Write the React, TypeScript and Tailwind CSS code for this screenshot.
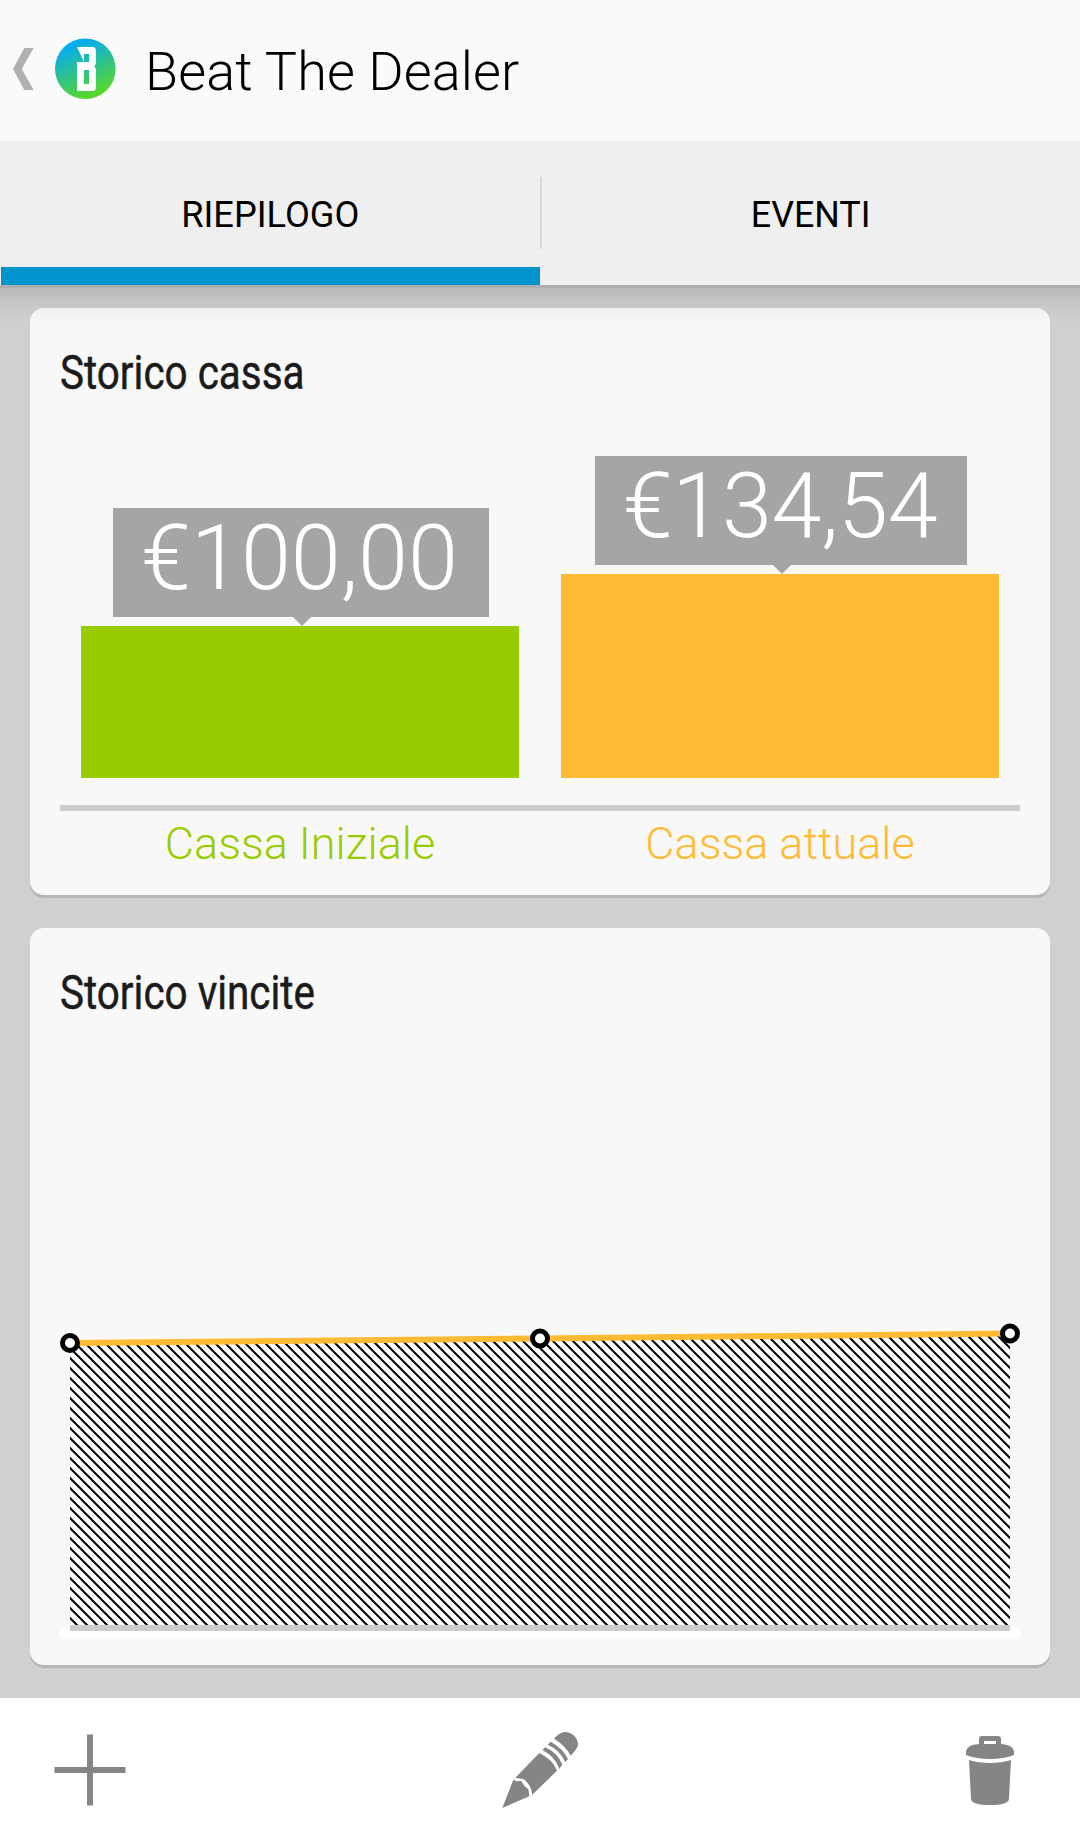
import type { ReactNode } from "react";

const bars = [
  {
    label: "Cassa Iniziale",
    value: "€100,00",
    height: 152,
    column: "ml-[21px]",
    bar: "bg-[#99cc00]",
    text: "text-[#99cc00]",
    bubble: "w-[376px] left-px pr-[3px]",
    arrow: "left-[180px]",
  },
  {
    label: "Cassa attuale",
    value: "€134,54",
    height: 204,
    column: "ml-[42px]",
    bar: "bg-[#ffbb33]",
    text: "text-[#ffbb33]",
    bubble: "w-[372px] left-px pr-[2px] tracking-[-0.3px]",
    arrow: "left-[178px]",
  },
];

const points = [
  { x: 10, y: 13 },
  { x: 480, y: 8.5 },
  { x: 950, y: 3.5 },
];

const Logo = () => (
  <svg className="ml-[19px] h-[64px] w-[64px]" viewBox="53 37 64 64">
    <defs>
      <linearGradient id="logo" x1="0.3" y1="0" x2="0.7" y2="1">
        <stop offset="0.08" stopColor="#04adf2" />
        <stop offset="0.9" stopColor="#55d62f" />
      </linearGradient>
    </defs>
    <circle cx="85.3" cy="68.8" r="30.3" fill="url(#logo)" />
    <path
      fill="#fff"
      fillRule="evenodd"
      d="M77 47H92.5Q95.9 47 95.9 50.5V64L94.2 66.5L95.9 68.5V87.5Q95.9 91 92.5 91H77V62H83.5V60.8ZM84 54V62H89V54ZM84 70V84H89V70Z"
    />
  </svg>
);

const Card = ({ title, className, children }: { title: string; className: string; children: ReactNode }) => (
  <section className={`rounded-[14px] bg-[#f8f8f8] px-[30px] shadow-[0_3px_0_#b6b7b6] ${className}`}>
    <h2 className="flex h-[128px] origin-left scale-x-[0.842] items-center pt-[2px] text-[48px] whitespace-nowrap text-[#1b1b1b] [-webkit-text-stroke:0.5px_#1b1b1b]">
      {title}
    </h2>
    {children}
  </section>
);

const App = () => {
  return (
    <div className="flex h-[1842px] w-[1080px] flex-col overflow-hidden bg-[#d0d0d0] font-['Roboto',sans-serif]">
      {/* ACTION BAR */}
      <header className="flex h-[141px] shrink-0 items-center bg-[#fafafa] pb-[3px]">
        <svg className="ml-[13px] h-[42px] w-[21px]" viewBox="0 0 21 42">
          <path d="M11.3 0H20.7L8.7 21L20.7 42H11.3L0 21Z" fill="#b0b0b0" />
        </svg>
        <Logo />
        <h1 className="ml-[28px] pt-[5px] text-[54px] font-light tracking-[0.08px] text-black">Beat The Dealer</h1>
      </header>

      {/* TABS */}
      <nav className="relative z-10 flex h-[144px] shrink-0 bg-[#efefef] text-[37.5px] text-black">
        <button className="ml-px h-full w-[539px] border-b-[18px] border-[#0093cc] pt-[20px]">
          <span className="inline-block scale-x-[0.965]">RIEPILOGO</span>
        </button>
        <div className="mt-[36px] h-[72px] w-[2px] bg-[#d8d8d8]" />
        <button className="h-full w-[538px] pt-[2px]">
          <span className="inline-block scale-x-[0.955]">EVENTI</span>
        </button>
        <div className="absolute top-full left-0 h-[3px] w-full bg-[#adafad]" />
        <div className="absolute top-[147px] left-0 h-[36px] w-full bg-linear-to-b from-black/11 via-black/4 to-transparent" />
      </nav>

      <main className="flex grow flex-col gap-[33px] px-[30px] pt-[23px]">
        <Card title="Storico cassa" className="h-[587px]">
          <div className="flex h-[342px] items-end">
            {bars.map((b) => (
              <div key={b.label} className={`flex w-[438px] flex-col items-center ${b.column}`}>
                <div
                  className={`relative mb-[9px] flex h-[109px] items-center justify-center bg-[#a5a5a5] pb-[8px] text-[90px] font-light text-white ${b.bubble}`}
                >
                  {b.value}
                  <svg className={`absolute top-full h-[9px] w-[18px] ${b.arrow}`} viewBox="0 0 18 9">
                    <path d="M0 0H18L9 9Z" fill="#a5a5a5" />
                  </svg>
                </div>
                <div className={`w-full ${b.bar}`} style={{ height: b.height }} />
              </div>
            ))}
          </div>
          <div className="mt-[27px] h-[6px] bg-[#cccccc]" />
          <div className="flex text-[45px] font-light">
            {bars.map((b) => (
              <div key={b.label} className={`w-[480px] text-center leading-[66px] ${b.text}`}>
                {b.label}
              </div>
            ))}
          </div>
        </Card>

        <Card title="Storico vincite" className="h-[737px]">
          <svg className="mt-[274px] h-[320px] w-[960px] overflow-visible" viewBox="0 0 960 320">
            <defs>
              <pattern id="hatch" x="2" width="10" height="10" patternUnits="userSpaceOnUse">
                <rect width="10" height="10" fill="#fff" />
                <path d="M-5 -5L15 15M-5 5L5 15M5 -5L15 5" stroke="#000" strokeWidth="2" />
              </pattern>
            </defs>
            <path d="M10 13L480 8.5L950 3.5V295H10Z" fill="url(#hatch)" />
            <rect x="0" y="298" width="960" height="10" fill="#fff" />
            <rect x="10" y="295" width="940" height="6" fill="#cccccc" />
            <polyline points={points.map((p) => `${p.x},${p.y}`).join(" ")} fill="none" stroke="#ffbb33" strokeWidth="6" />
            {points.map((p) => (
              <circle key={p.x} cx={p.x} cy={p.y} r="7.5" fill="#fff" stroke="#000" strokeWidth="5" />
            ))}
          </svg>
        </Card>
      </main>

      {/* BOTTOM BAR */}
      <footer className="flex h-[144px] shrink-0 items-center bg-white pr-[66px] pl-[54px]">
        <svg className="h-[72px] w-[72px]" viewBox="0 0 72 72">
          <path d="M36 0.5V71.5M0.5 36H71.5" stroke="#858585" strokeWidth="6" />
        </svg>
        <svg className="ml-[364px] h-[120px] w-[100px]" viewBox="0 0 300 360" fill="#858585">
          <path d="M192 86Q210 66 224 66Q242 66 254 79Q264 90 264 104Q262 116 242 137Q226 106 192 86Z" />
          <path d="M182 95Q220 116 234 148L225 156Q210 120 173 104Z" />
          <path d="M166 112Q204 130 217 164L208 176Q194 139 157 120Z" />
          <path d="M148 129Q188 148 201 182L127 254Q124 226 102 208L76 203Z" />
          <path d="M70 209L80 214L94 213L104 229L115 237L118 259L37 294Z" />
        </svg>
        <svg className="ml-auto h-[70px] w-[48px]" viewBox="0 0 48 70" fill="#858585">
          <path d="M13 9V4Q13 1 16 1H32Q35 1 35 4V9Q47 10 48 16V20Q38 24 24 24Q10 24 0 20V16Q1 10 13 9ZM18 6V9H30V6Z" />
          <path d="M3 25Q12 28 24 28Q36 28 45 25L43 64Q42 70 24 70Q6 70 5 64Z" />
        </svg>
      </footer>
    </div>
  );
};

export default App;
